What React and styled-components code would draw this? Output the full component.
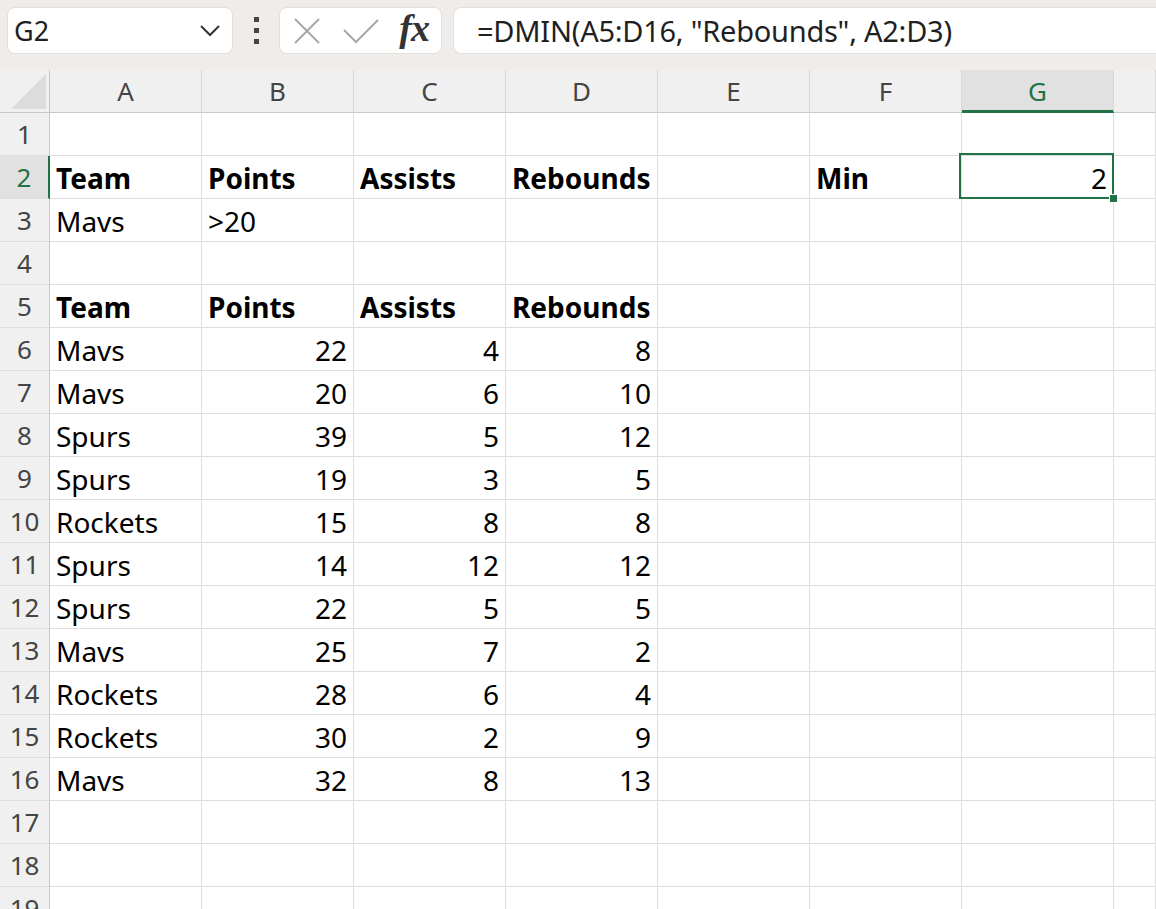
import React from 'react';
import styled, { createGlobalStyle, css } from 'styled-components';

const GREEN = '#217346';
const GRID = '#dedede';

const GlobalStyle = createGlobalStyle`
  html, body {
    margin: 0;
    padding: 0;
    width: 1156px;
    height: 909px;
    overflow: hidden;
    background: #fff;
    font-family: "Noto Sans", "Open Sans", sans-serif;
  }
`;

const Toolbar = styled.div`
  display: flex;
  align-items: center;
  height: 70px;
  padding: 0 0 0 7px;
  background: #f0ecea;
  box-sizing: border-box;
`;

const Box = styled.div`
  display: flex;
  align-items: center;
  height: 47px;
  margin-bottom: 9px;
  background: #fff;
  border: 1px solid #e2dfdd;
  border-radius: 8px;
  box-sizing: border-box;
`;

const NameBox = styled(Box)`
  width: 226px;
  padding: 0 12px 0 6px;
  justify-content: space-between;
  font-size: 27px;
  color: #1f1f1f;
`;

const Kebab = styled.div`
  display: flex;
  flex-direction: column;
  gap: 6px;
  width: 46px;
  align-items: center;
  margin-bottom: 9px;

  span {
    width: 5px;
    height: 5px;
    background: #444;
  }
`;

const Buttons = styled(Box)`
  width: 163px;
  padding: 0 12px 0 13px;
`;

const Fx = styled.span`
  margin-left: auto;
  font-family: "Liberation Serif", "DejaVu Serif", serif;
  font-style: italic;
  font-weight: 700;
  font-size: 38px;
  color: #333;
  letter-spacing: -1px;
  margin-top: -6px;
`;

const FormulaInput = styled(Box)`
  flex: 1;
  margin-left: 11px;
  padding-left: 23px;
  border-right: none;
  border-radius: 8px 0 0 8px;
  font-size: 29px;
  color: #1f1f1f;
  letter-spacing: -0.25px;
`;

const Sheet = styled.div`
  display: grid;
  grid-template-columns: 50px repeat(7, 152px) 1fr;
  grid-auto-rows: 43px;
`;

const Head = styled.div`
  display: flex;
  align-items: center;
  justify-content: center;
  box-sizing: border-box;
  background: ${p => (p.$active ? '#e1e1e1' : '#f0f0f0')};
  color: ${p => (p.$active ? GREEN : '#444')};
  font-size: 26px;
  border-bottom: 1px solid #c8c8c8;
  border-right: 1px solid #d8d8d8;
  ${p => p.$active && css`
    border-bottom: 3px solid ${GREEN};
    padding-top: 2px;
  `}
`;

const Corner = styled(Head)`
  border-right: 1px solid #c8c8c8;
  align-items: flex-end;
  justify-content: flex-end;
  padding: 0 3px 3px 0;
`;

const RowNum = styled.div`
  display: flex;
  align-items: center;
  justify-content: center;
  box-sizing: border-box;
  background: ${p => (p.$active ? '#e1e1e1' : '#f0f0f0')};
  color: ${p => (p.$active ? GREEN : '#444')};
  font-size: 26px;
  border-bottom: 1px solid ${GRID};
  border-right: ${p => (p.$active ? `2px solid ${GREEN}` : '1px solid #c8c8c8')};
`;

const Cell = styled.div`
  display: flex;
  align-items: center;
  justify-content: ${p => (p.$num ? 'flex-end' : 'flex-start')};
  padding: 2px 6px 0 6px;
  box-sizing: border-box;
  border-bottom: 1px solid ${GRID};
  border-right: 1px solid ${GRID};
  font-size: 28px;
  font-weight: ${p => (p.$bold ? 700 : 400)};
  color: #000;
  white-space: nowrap;
  ${p => p.$sel && css`
    position: relative;
    z-index: 2;
  `}
`;

const Selection = styled.div`
  position: absolute;
  top: -3px;
  left: -3px;
  right: -1px;
  bottom: -1px;
  border: 2px solid ${GREEN};
`;

const Handle = styled.div`
  position: absolute;
  right: -5px;
  bottom: -5px;
  width: 7px;
  height: 7px;
  background: ${GREEN};
  border-top: 1px solid #fff;
  border-left: 1px solid #fff;
`;

const cols = ['A', 'B', 'C', 'D', 'E', 'F', 'G', ''];

const hdr = ['Team', 'Points', 'Assists', 'Rebounds'];

const data = [
  ['Mavs', 22, 4, 8],
  ['Mavs', 20, 6, 10],
  ['Spurs', 39, 5, 12],
  ['Spurs', 19, 3, 5],
  ['Rockets', 15, 8, 8],
  ['Spurs', 14, 12, 12],
  ['Spurs', 22, 5, 5],
  ['Mavs', 25, 7, 2],
  ['Rockets', 28, 6, 4],
  ['Rockets', 30, 2, 9],
  ['Mavs', 32, 8, 13],
];

const blank = () => Array(8).fill(null);

const buildRows = () => {
  const rows = [];
  rows.push(blank());
  rows.push([...hdr.map(v => ({ v, bold: true })), null, { v: 'Min', bold: true }, { v: 2, num: true, sel: true }, null]);
  rows.push([{ v: 'Mavs' }, { v: '>20' }, null, null, null, null, null, null]);
  rows.push(blank());
  rows.push([...hdr.map(v => ({ v, bold: true })), null, null, null, null]);
  data.forEach(r => {
    rows.push([{ v: r[0] }, ...r.slice(1).map(v => ({ v, num: true })), null, null, null, null]);
  });
  rows.push(blank(), blank(), blank());
  return rows;
};

const CloseIcon = () => (
  <svg width="28" height="28" viewBox="0 0 28 28">
    <path d="M2 2 L26 26 M26 2 L2 26" stroke="#a8a8a8" strokeWidth="2" fill="none" />
  </svg>
);

const CheckIcon = () => (
  <svg width="36" height="26" viewBox="0 0 36 26" style={{ marginLeft: 22 }}>
    <path d="M1 12 L13 24 L35 2" stroke="#a8a8a8" strokeWidth="2" fill="none" />
  </svg>
);

const Chevron = () => (
  <svg width="20" height="12" viewBox="0 0 20 12">
    <path d="M1 1 L10 10 L19 1" stroke="#333" strokeWidth="2" fill="none" />
  </svg>
);

const App = () => {
  const rows = buildRows();

  return (
    <>
      <GlobalStyle />
      <Toolbar>
        <NameBox>
          <span>G2</span>
          <Chevron />
        </NameBox>
        <Kebab><span /><span /><span /></Kebab>
        <Buttons>
          <CloseIcon />
          <CheckIcon />
          <Fx>fx</Fx>
        </Buttons>
        <FormulaInput>=DMIN(A5:D16, "Rebounds", A2:D3)</FormulaInput>
      </Toolbar>

      <Sheet>
        <Corner>
          <svg width="35" height="35" viewBox="0 0 35 35">
            <polygon points="35,0 35,35 0,35" fill="#dcdcdc" />
          </svg>
        </Corner>
        {cols.map((c, i) => (
          <Head key={i} $active={c === 'G'}>{c}</Head>
        ))}

        {rows.map((row, i) => (
          <React.Fragment key={i}>
            <RowNum $active={i === 1}>{i + 1}</RowNum>
            {row.map((cell, j) => (
              <Cell key={j} $bold={cell?.bold} $num={cell?.num} $sel={cell?.sel}>
                {cell?.v}
                {cell?.sel && (
                  <Selection>
                    <Handle />
                  </Selection>
                )}
              </Cell>
            ))}
          </React.Fragment>
        ))}
      </Sheet>
    </>
  );
};

export default App;
